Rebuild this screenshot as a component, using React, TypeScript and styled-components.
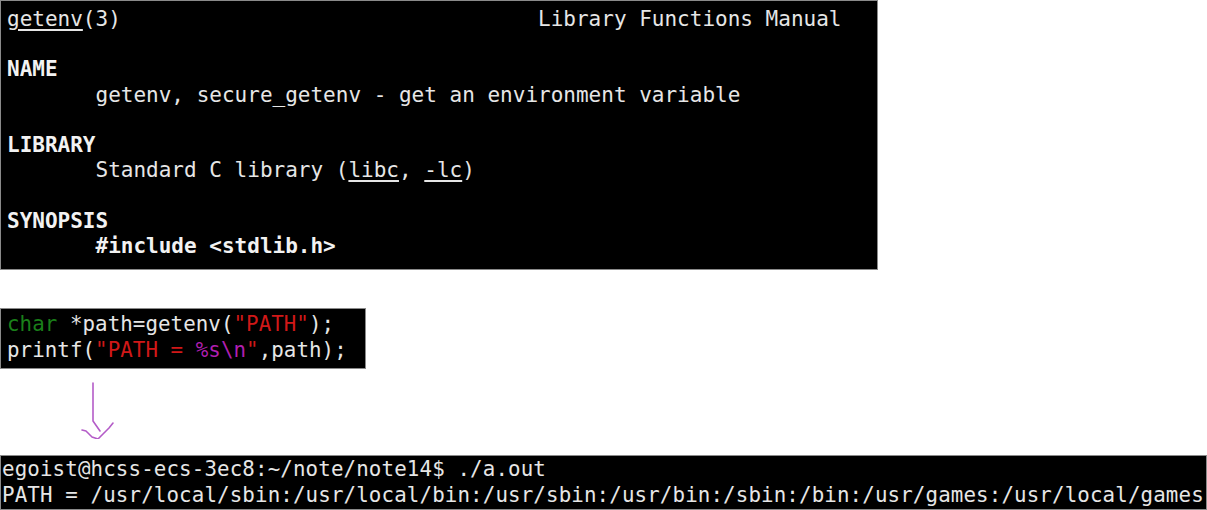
import React from "react";
import styled, { createGlobalStyle } from "styled-components";

const Global = createGlobalStyle`
  html, body { margin: 0; padding: 0; background: #ffffff; }
  body { width: 1207px; height: 510px; overflow: hidden; }
`;

const Page = styled.div`
  display: flex;
  flex-direction: column;
  align-items: flex-start;
  width: 1207px;
  height: 510px;
  overflow: hidden;
`;

const Terminal = styled.pre<{ $w: number; $h: number; $pt: number; $pl: number; $size: number; $lh: number; $ls?: number }>`
  box-sizing: border-box;
  margin: 0;
  width: ${(p) => p.$w}px;
  height: ${(p) => p.$h}px;
  padding: ${(p) => p.$pt}px 0 0 ${(p) => p.$pl}px;
  background: #000000;
  border: 1px solid #8a8a8a;
  color: #e6e6e6;
  font-family: "DejaVu Sans Mono", "Liberation Mono", monospace;
  font-size: ${(p) => p.$size}px;
  line-height: ${(p) => p.$lh}px;
  letter-spacing: ${(p) => p.$ls ?? 0}px;
  white-space: pre;
  overflow: hidden;
`;

const Gap = styled.div<{ $h: number }>`
  height: ${(p) => p.$h}px;
  flex: none;
`;

const U = styled.span`
  text-decoration: underline;
  text-underline-offset: 3px;
`;

const B = styled.span`
  font-weight: bold;
  color: #f2f2f2;
`;

const Tok = styled.span<{ $c: string }>`
  color: ${(p) => p.$c};
`;

const ArrowArea = styled.div`
  height: 86px;
  width: 200px;
  flex: none;
  padding-left: 78px;
  box-sizing: border-box;
`;

export default function App() {
  return (
    <Page>
      <Global />
      <Terminal $w={878} $h={271} $pt={6} $pl={6} $size={21} $lh={25.2}>
        <U>getenv</U>(3){"                                 "}Library Functions Manual{"\n"}
        {"\n"}
        <B>NAME</B>{"\n"}
        {"       "}getenv, secure_getenv - get an environment variable{"\n"}
        {"\n"}
        <B>LIBRARY</B>{"\n"}
        {"       "}Standard C library (<U>libc</U>, <U>-lc</U>){"\n"}
        {"\n"}
        <B>SYNOPSIS</B>{"\n"}
        {"       "}<B>#include &lt;stdlib.h&gt;</B>
      </Terminal>
      <Gap $h={38} />
      <Terminal $w={366} $h={61} $pt={2} $pl={6} $size={20.8} $lh={26} $ls={0.06}>
        <Tok $c="#1a7f1a">char</Tok> *path=getenv(<Tok $c="#d01818">"PATH"</Tok>);{"\n"}
        printf(<Tok $c="#d01818">"PATH = </Tok><Tok $c="#b01fb0">%s\n</Tok><Tok $c="#d01818">"</Tok>,path);
      </Terminal>
      <ArrowArea>
        <svg width="40" height="70" viewBox="0 0 40 70" fill="none" stroke="#b45cc8" strokeWidth="1.6" strokeLinecap="round" strokeLinejoin="round">
          <path d="M15 14 L15 52 L22 62" />
          <path d="M4 61 L8 62 L14 68 L20 70 L25 65 L31 59 L35 54" />
        </svg>
      </ArrowArea>
      <Terminal $w={1207} $h={55} $pt={0} $pl={1} $size={20.8} $lh={26} $ls={0.13}>
        egoist@hcss-ecs-3ec8:~/note/note14$ ./a.out{"\n"}
        PATH = /usr/local/sbin:/usr/local/bin:/usr/sbin:/usr/bin:/sbin:/bin:/usr/games:/usr/local/games
      </Terminal>
    </Page>
  );
}
